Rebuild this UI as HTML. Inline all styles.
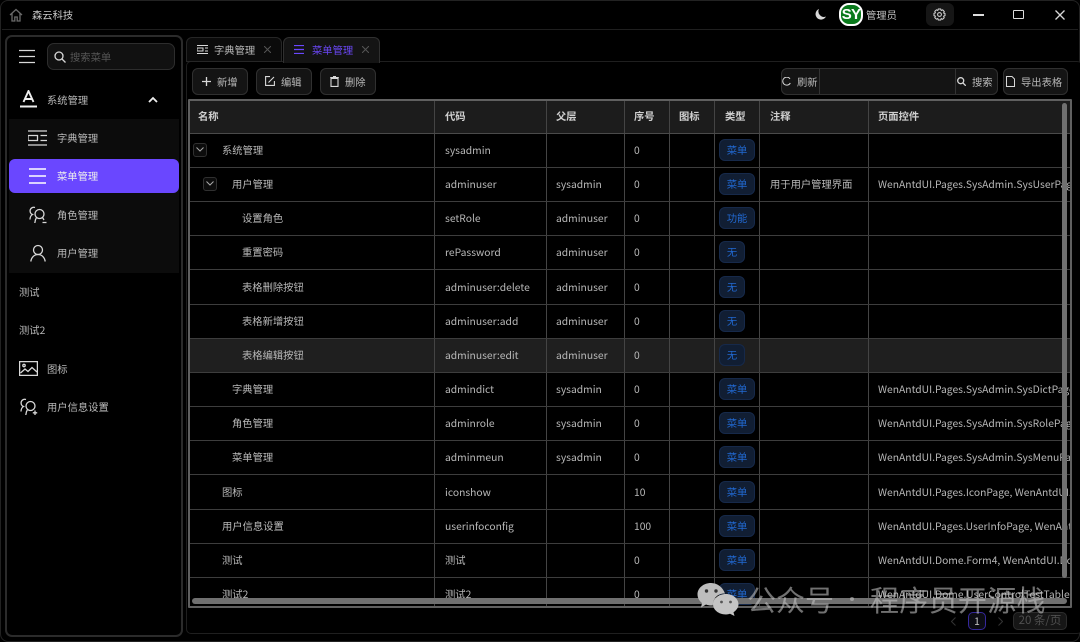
<!DOCTYPE html>
<html lang="zh"><head><meta charset="utf-8"><title>森云科技</title>
<style>
*{box-sizing:border-box;margin:0;padding:0}
html,body{width:1080px;height:642px;background:#000;overflow:hidden}
body{position:relative;font-family:"Noto Sans CJK SC","Liberation Sans",sans-serif;font-size:10.3px;color:#b8b8b8;filter:blur(.3px)}
.t,.b,.l,.v,.h,.tag,svg{position:absolute}
.t{white-space:nowrap;line-height:14px}
.l{height:1px;left:190px;width:880px;background:#3d3d3d}
.v{width:1px;top:99px;height:508px;background:#444}
.b{border:1px solid #303030;background:#141414;border-radius:5px}
.h{color:#cfcfcf;font-weight:700;top:109px;line-height:14px;white-space:nowrap}
.tag{background:#111e33;border:1px solid #16294a;border-radius:6px;color:#2168d0;height:22px;line-height:19px;text-align:center;width:36px;left:719px}
.w{width:26px;left:719px}
svg{fill:none;stroke:#d8d8d8;stroke-width:1.3}
</style></head><body>
<div class="b" style="left:0;top:0;width:1080px;height:642px;background:#000;border-color:#222;border-radius:8px"></div>
<div class="l" style="left:2px;width:1076px;top:29px;background:#1f1f1f"></div>
<svg style="left:9px;top:8px" width="14" height="14" viewBox="0 0 14 14"><path style="stroke:#6a6a6a" d="M1 7 7 1.500 13 7M3 5.500V13H5.800V9H8.200V13H11V5.500"/></svg>
<div class="t" style="left:32px;top:8px;color:#c8c8c8">森云科技</div>

<svg style="left:814px;top:8px;stroke:none;fill:#d8d8d8" width="13" height="13" viewBox="0 0 13 13"><path d="M5 1A5.500 5.500 0 1 0 12 8.500 5.500 5.500 0 0 1 5 1Z"/></svg>
<div style="position:absolute;left:839px;top:3px;width:24px;height:23px;border-radius:10px;background:#0a7a1c;border:2px solid #fff;color:#fff;font:700 15px/19px 'Liberation Sans',sans-serif;text-align:center;letter-spacing:-.8px">SY</div>
<div class="t" style="left:866px;top:8px;color:#c0c0c0">管理员</div>
<div class="b" style="left:926px;top:3px;width:28px;height:23px;background:#161616;border:0;border-radius:6px"></div>
<svg style="left:933px;top:8px" width="13" height="13" viewBox="0 0 13 13"><circle cx="6.500" cy="6.500" r="1.900" style="stroke-width:1"/><path style="stroke-width:1" d="M5.300 1H7.700L8.200 2.500 9.700 1.900 11.300 3.600 10.600 5 12 5.500V7.700L10.600 8.200 11.200 9.700 9.600 11.300 8.200 10.600 7.700 12H5.300L4.800 10.600 3.400 11.200 1.800 9.600 2.400 8.200 1 7.700V5.300L2.400 4.800 1.800 3.400 3.400 1.800 4.800 2.400Z"/></svg>
<div style="position:absolute;left:973px;top:14px;width:11px;height:1.500px;background:#ddd"></div>
<div style="position:absolute;left:1013px;top:10px;width:11px;height:9px;border:1.300px solid #ddd;border-radius:1px"></div>
<svg style="left:1055px;top:10px" width="10" height="10" viewBox="0 0 10 10"><path d="M.5.500 9.500 9.500M9.500.500.500 9.500"/></svg>

<!-- sidebar -->
<div class="b" style="left:5px;top:35px;width:178px;height:602px;background:#000;border:2px solid #2b2b2b;border-radius:7px"></div>
<div style="position:absolute;left:9px;top:79px;width:170px;height:40px;background:#000"></div>
<div style="position:absolute;left:9px;top:119px;width:170px;height:154px;background:#0c0c0c"></div>
<svg style="left:19px;top:49px" width="16" height="15" viewBox="0 0 16 15"><path d="M0 1.500H16M0 7.500H16M0 13.500H16"/></svg>
<div class="b" style="left:47px;top:43px;width:128px;height:27px;background:#111;border:1.500px solid #2d2d2d;border-radius:7px"></div>
<svg style="left:54px;top:51px" width="12" height="12" viewBox="0 0 12 12"><circle cx="5" cy="5" r="4"/><path d="M8 8 11.500 11.500"/></svg>
<div class="t" style="left:70px;top:50px;color:#555">搜索菜单</div>
<svg style="left:20px;top:90px" width="17" height="18" viewBox="0 0 17 18"><path style="stroke-width:1.900;stroke:#eee" d="M3.500 12 8.500 1 13.500 12M5 9H12M0 16.500H17"/></svg>
<div class="t" style="left:47px;top:93px">系统管理</div>
<svg style="left:148px;top:96px" width="10" height="7" viewBox="0 0 10 7"><path style="stroke-width:1.800;stroke:#eee" d="M1 6 5 2 9 6"/></svg>
<svg style="left:28px;top:130px" width="19" height="16" viewBox="0 0 19 16"><path d="M0 1H19M0 15H19M0 5.500H9.500V10.500H0ZM12.500 5.500H19M12.500 10.500H19"/></svg>
<div class="t" style="left:57px;top:131px">字典管理</div>
<div style="position:absolute;left:9px;top:159px;width:170px;height:34px;background:#6a47ff;border-radius:6px"></div>
<svg style="left:29px;top:168px" width="17" height="16" viewBox="0 0 17 16"><path style="stroke:#fff;stroke-width:1.500" d="M0 1H17M0 8H17M0 15H17"/></svg>
<div class="t" style="left:57px;top:169px;color:#eee">菜单管理</div>
<svg style="left:29px;top:206px" width="18" height="18" viewBox="0 0 18 18"><circle cx="10.500" cy="8" r="4.500"/><path d="M6 1.500A3.500 3.500 0 0 0 3.500 8.500C1.800 9.500 1 11.500 1 13.500M7.500 11.500C6.500 13 6 14.500 5.800 17M13.500 11.500 15 14M13.500 16.500H17.500"/></svg>
<div class="t" style="left:57px;top:208px">角色管理</div>
<svg style="left:30px;top:244px" width="16" height="18" viewBox="0 0 16 18"><circle cx="8" cy="6" r="4.500"/><path d="M.8 17.500C1.500 13 4.500 10.500 8 10.500S14.500 13 15.200 17.500"/></svg>
<div class="t" style="left:57px;top:246px">用户管理</div>
<div class="t" style="left:19px;top:285px">测试</div>
<div class="t" style="left:19px;top:323px">测试2</div>
<svg style="left:19px;top:361px" width="19" height="15" viewBox="0 0 19 15"><rect x=".6" y=".6" width="17.800" height="13.800"/><circle cx="5" cy="4.500" r="1.200"/><path d="M1.500 12 6 8 9 10.500 13 6.500 18 11"/></svg>
<div class="t" style="left:47px;top:362px">图标</div>
<svg style="left:20px;top:398px" width="18" height="18" viewBox="0 0 18 18"><circle cx="10.500" cy="8" r="4.500"/><path d="M6 1.500A3.500 3.500 0 0 0 3.500 8.500C1.800 9.500 1 11.500 1 13.500M7.500 11.500C6.500 13 6 14.500 5.800 17M15 12.500V17M12.800 14.800H17.200"/></svg>
<div class="t" style="left:47px;top:400px">用户信息设置</div>

<!-- main frame -->
<div class="b" style="left:186px;top:61px;width:896px;height:573px;background:#000;border:1px solid #1f1f1f;border-right:0"></div>
<div class="b" style="left:186px;top:37px;width:96px;height:25px;background:#0b0b0b;border-color:#262626;border-radius:6px 6px 0 0"></div>
<div class="b" style="left:283px;top:37px;width:97px;height:26px;background:#141414;border-color:#303030;border-bottom:0;border-radius:6px 6px 0 0"></div>
<svg style="left:197px;top:45px" width="11" height="9" viewBox="0 0 11 9"><path style="stroke-width:1" d="M0 .5H11M0 8.500H11M0 3H6V6H0ZM8 3H11M8 6H11"/></svg>
<div class="t" style="left:214px;top:43px">字典管理</div>
<svg style="left:264px;top:46px" width="7" height="7" viewBox="0 0 7 7"><path style="stroke:#555;stroke-width:1" d="M0 0 7 7M7 0 0 7"/></svg>
<svg style="left:294px;top:45px" width="10" height="9" viewBox="0 0 10 9"><path style="stroke:#6a47ff;stroke-width:1.300" d="M0 .5H10M0 4.500H10M0 8.500H10"/></svg>
<div class="t" style="left:312px;top:43px;color:#6a47f5">菜单管理</div>
<svg style="left:362px;top:46px" width="7" height="7" viewBox="0 0 7 7"><path style="stroke:#555;stroke-width:1" d="M0 0 7 7M7 0 0 7"/></svg>

<div class="b" style="left:192px;top:68px;width:56px;height:27px;border-radius:6px"></div>
<svg style="left:202px;top:77px" width="9" height="9" viewBox="0 0 9 9"><path d="M4.500 0V9M0 4.500H9"/></svg>
<div class="t" style="left:217px;top:75px">新增</div>
<div class="b" style="left:256px;top:68px;width:56px;height:27px;border-radius:6px"></div>
<svg style="left:265px;top:76px" width="10" height="10" viewBox="0 0 10 10"><path style="stroke-width:1.100" d="M5 .6H.6V9.400H9.400V5M3.500 6.500 9 1"/></svg>
<div class="t" style="left:281px;top:75px">编辑</div>
<div class="b" style="left:320px;top:68px;width:56px;height:27px;border-radius:6px"></div>
<svg style="left:330px;top:76px" width="9" height="11" viewBox="0 0 9 11"><path style="stroke-width:1.100" d="M1 2.500H8V10.400H1ZM.2 1.500H8.800M3 .5H6"/></svg>
<div class="t" style="left:345px;top:75px">删除</div>

<div class="b" style="left:781px;top:68px;width:217px;height:27px;border-radius:6px;background:#141414"></div>
<div style="position:absolute;left:819px;top:69px;width:1px;height:25px;background:#333"></div>
<div style="position:absolute;left:955px;top:69px;width:1px;height:25px;background:#333"></div>
<svg style="left:782px;top:77px" width="9" height="9" viewBox="0 0 9 9"><path style="stroke-width:1" d="M8 1.800A4 4 0 1 0 8.300 6"/></svg>
<div class="t" style="left:797px;top:75px">刷新</div>
<svg style="left:957px;top:77px" width="9" height="9" viewBox="0 0 9 9"><circle cx="3.700" cy="3.700" r="3"/><path d="M6 6 8.800 8.800"/></svg>
<div class="t" style="left:972px;top:75px">搜索</div>
<div class="b" style="left:1003px;top:68px;width:65px;height:27px;border-radius:6px"></div>
<svg style="left:1006px;top:76px" width="9" height="11" viewBox="0 0 9 11"><path style="stroke-width:1" d="M.5.500H6L8.500 3V10.500H.5Z"/></svg>
<div class="t" style="left:1021px;top:75px">导出表格</div>

<!-- table -->
<div style="position:absolute;left:189px;top:99px;width:882px;height:34px;background:#1c1c1c"></div>
<div style="position:absolute;left:190px;top:338.500px;width:880px;height:34px;background:#1f1f1f"></div>
<div class="h" style="left:198px">名称</div><div class="h" style="left:445px">代码</div><div class="h" style="left:556px">父层</div><div class="h" style="left:634px">序号</div><div class="h" style="left:679px">图标</div><div class="h" style="left:725px">类型</div><div class="h" style="left:770px">注释</div><div class="h" style="left:878px">页面控件</div>

<div class="v" style="left:434px"></div><div class="v" style="left:546px"></div><div class="v" style="left:624px"></div><div class="v" style="left:669px"></div><div class="v" style="left:714px"></div><div class="v" style="left:759px"></div><div class="v" style="left:868px"></div>
<div class="l" style="top:133px;background:#4a4a4a"></div><div class="l" style="top:167px"></div><div class="l" style="top:201px"></div><div class="l" style="top:235px"></div><div class="l" style="top:269px"></div><div class="l" style="top:304px"></div><div class="l" style="top:338px"></div><div class="l" style="top:372px"></div><div class="l" style="top:406px"></div><div class="l" style="top:440px"></div><div class="l" style="top:474px"></div><div class="l" style="top:509px"></div><div class="l" style="top:543px"></div><div class="l" style="top:577px"></div>

<div class="b" style="left:193px;top:143px;width:14px;height:14px;background:#0c0c0c;border-radius:3px"></div>
<svg style="left:196px;top:147px" width="8" height="5" viewBox="0 0 8 5"><path style="stroke:#aaa;stroke-width:1" d="M.5.500 4 4 7.500.500"/></svg>
<div class="b" style="left:203px;top:177px;width:14px;height:14px;background:#0c0c0c;border-radius:3px"></div>
<svg style="left:206px;top:181px" width="8" height="5" viewBox="0 0 8 5"><path style="stroke:#aaa;stroke-width:1" d="M.5.500 4 4 7.500.500"/></svg>

<div class="t" style="left:222px;top:143px">系统管理</div><div class="t" style="left:445px;top:143px">sysadmin</div><div class="t" style="left:634px;top:143px">0</div><div class="tag" style="top:139px">菜单</div>
<div class="t" style="left:232px;top:177px">用户管理</div><div class="t" style="left:445px;top:177px">adminuser</div><div class="t" style="left:556px;top:177px">sysadmin</div><div class="t" style="left:634px;top:177px">0</div><div class="tag" style="top:173px">菜单</div><div class="t" style="left:770px;top:177px">用于用户管理界面</div><div class="t" style="left:878px;top:177px;width:192px;overflow:hidden">WenAntdUI.Pages.SysAdmin.SysUserPage</div>
<div class="t" style="left:242px;top:211px">设置角色</div><div class="t" style="left:445px;top:211px">setRole</div><div class="t" style="left:556px;top:211px">adminuser</div><div class="t" style="left:634px;top:211px">0</div><div class="tag" style="top:207px">功能</div>
<div class="t" style="left:242px;top:245px">重置密码</div><div class="t" style="left:445px;top:245px">rePassword</div><div class="t" style="left:556px;top:245px">adminuser</div><div class="t" style="left:634px;top:245px">0</div><div class="tag w" style="top:241px">无</div>
<div class="t" style="left:242px;top:280px">表格删除按钮</div><div class="t" style="left:445px;top:280px">adminuser:delete</div><div class="t" style="left:556px;top:280px">adminuser</div><div class="t" style="left:634px;top:280px">0</div><div class="tag w" style="top:276px">无</div>
<div class="t" style="left:242px;top:314px">表格新增按钮</div><div class="t" style="left:445px;top:314px">adminuser:add</div><div class="t" style="left:556px;top:314px">adminuser</div><div class="t" style="left:634px;top:314px">0</div><div class="tag w" style="top:310px">无</div>
<div class="t" style="left:242px;top:348px">表格编辑按钮</div><div class="t" style="left:445px;top:348px">adminuser:edit</div><div class="t" style="left:556px;top:348px">adminuser</div><div class="t" style="left:634px;top:348px">0</div><div class="tag w" style="top:344px">无</div>
<div class="t" style="left:232px;top:382px">字典管理</div><div class="t" style="left:445px;top:382px">admindict</div><div class="t" style="left:556px;top:382px">sysadmin</div><div class="t" style="left:634px;top:382px">0</div><div class="tag" style="top:378px">菜单</div><div class="t" style="left:878px;top:382px;width:192px;overflow:hidden">WenAntdUI.Pages.SysAdmin.SysDictPage</div>
<div class="t" style="left:232px;top:416px">角色管理</div><div class="t" style="left:445px;top:416px">adminrole</div><div class="t" style="left:556px;top:416px">sysadmin</div><div class="t" style="left:634px;top:416px">0</div><div class="tag" style="top:412px">菜单</div><div class="t" style="left:878px;top:416px;width:192px;overflow:hidden">WenAntdUI.Pages.SysAdmin.SysRolePage</div>
<div class="t" style="left:232px;top:450px">菜单管理</div><div class="t" style="left:445px;top:450px">adminmeun</div><div class="t" style="left:556px;top:450px">sysadmin</div><div class="t" style="left:634px;top:450px">0</div><div class="tag" style="top:446px">菜单</div><div class="t" style="left:878px;top:450px;width:192px;overflow:hidden">WenAntdUI.Pages.SysAdmin.SysMenuPage</div>
<div class="t" style="left:222px;top:485px">图标</div><div class="t" style="left:445px;top:485px">iconshow</div><div class="t" style="left:634px;top:485px">10</div><div class="tag" style="top:481px">菜单</div><div class="t" style="left:878px;top:485px;width:192px;overflow:hidden">WenAntdUI.Pages.IconPage, WenAntdUI.Pages</div>
<div class="t" style="left:222px;top:519px">用户信息设置</div><div class="t" style="left:445px;top:519px">userinfoconfig</div><div class="t" style="left:634px;top:519px">100</div><div class="tag" style="top:515px">菜单</div><div class="t" style="left:878px;top:519px;width:192px;overflow:hidden">WenAntdUI.Pages.UserInfoPage, WenAntdUI.Pages</div>
<div class="t" style="left:222px;top:553px">测试</div><div class="t" style="left:445px;top:553px">测试</div><div class="t" style="left:634px;top:553px">0</div><div class="tag" style="top:549px">菜单</div><div class="t" style="left:878px;top:553px;width:192px;overflow:hidden">WenAntdUI.Dome.Form4, WenAntdUI.Dome</div>
<div class="t" style="left:222px;top:587px">测试2</div><div class="t" style="left:445px;top:587px">测试2</div><div class="t" style="left:634px;top:587px">0</div><div class="tag" style="top:583px">菜单</div><div class="t" style="left:878px;top:587px;width:192px;overflow:hidden">WenAntdUI.Dome.UserControlTestTable</div>

<div style="position:absolute;left:188px;top:99px;width:884px;height:509px;border:2px solid #606060;border-radius:1px"></div>
<div style="position:absolute;left:192px;top:598px;width:875px;height:6px;background:#707070;border-radius:3px"></div>
<div style="position:absolute;left:1062px;top:103px;width:5px;height:475px;background:#707070;border-radius:3px"></div>

<!-- pager -->
<svg style="left:951px;top:617px" width="5" height="9" viewBox="0 0 5 9"><path style="stroke:#333;stroke-width:1" d="M4.500.500.500 4.500 4.500 8.500"/></svg>
<div class="b" style="left:968px;top:612px;width:18px;height:18px;background:#0c0c14;border:1.500px solid #35289c;color:#c8c8c8;line-height:15px;text-align:center">1</div>
<svg style="left:998px;top:617px" width="5" height="9" viewBox="0 0 5 9"><path style="stroke:#333;stroke-width:1" d="M.5.500 4.500 4.500.5 8.500"/></svg>
<div class="b" style="left:1013px;top:612px;width:54px;height:18px;background:#161616;color:#4f4f4f;font-size:11.500px;line-height:15px;text-align:center;border-color:#2c2c2c">20 条/页</div>

<!-- watermark -->
<svg style="left:697px;top:582px;stroke:none" width="42" height="34" viewBox="0 0 42 34"><path style="fill:#bdbdbd" d="M14 1C6.500 1 .5 6 .5 12.500c0 3.500 2 6.500 4.500 8.500L4 25.500 9 22.500c2 .7 3.500 1 5 1 .7 0 1.400 0 2-.1C15.500 16 21.500 11 28 11.500 26 5.500 20.500 1 14 1Z"/><path style="fill:#c4c4c4" d="M29 12C21.500 12 16 16.800 16 22.300S21.500 32.500 29 32.500c1.500 0 2.800-.3 4-.7L37.500 34 36.500 30.300C39.500 28.300 41.500 25.500 41.500 22.300 41.500 16.800 36 12 29 12Z"/><circle cx="9.500" cy="9" r="1.700" fill="#333"/><circle cx="19" cy="9" r="1.700" fill="#333"/><circle cx="24.500" cy="20" r="1.400" fill="#555"/><circle cx="33.500" cy="20" r="1.400" fill="#555"/></svg>
<div class="t" style="left:747px;top:580px;font-size:29px;line-height:38px;color:rgba(195,195,195,.58)">公众号</div>
<div style="position:absolute;left:850px;top:597px;width:4px;height:4px;border-radius:50%;background:rgba(195,195,195,.58)"></div>
<div class="t" style="left:870px;top:580px;font-size:29px;line-height:38px;color:rgba(195,195,195,.58);letter-spacing:.3px">程序员开源栈</div>
</body></html>
